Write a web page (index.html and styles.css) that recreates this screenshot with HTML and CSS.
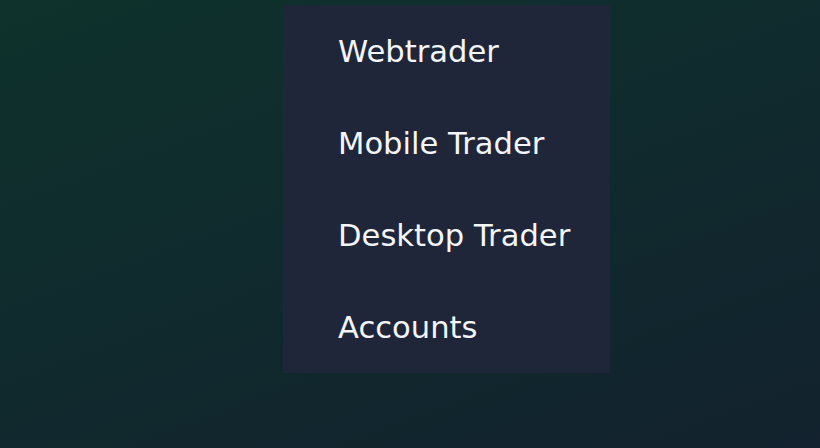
FILE: index.html
```html
<!DOCTYPE html>
<html lang="en">
<head>
<meta charset="utf-8">
<title>Menu</title>
<link rel="stylesheet" href="styles.css">
</head>
<body>
<div class="page">
  <nav class="menu">
    <a class="menu-item" href="#">Webtrader</a>
    <a class="menu-item" href="#">Mobile Trader</a>
    <a class="menu-item" href="#">Desktop Trader</a>
    <a class="menu-item" href="#">Accounts</a>
  </nav>
</div>
</body>
</html>
```
FILE: styles.css
```css
html, body {
  margin: 0;
  padding: 0;
}
body {
  width: 820px;
  height: 448px;
  overflow: hidden;
  background: linear-gradient(160deg, #0e322c 0%, #10292d 55%, #13222e 100%);
  font-family: "DejaVu Sans", "Noto Sans", sans-serif;
}
.page {
  padding: 5px 0 0 283px;
}
.menu {
  width: 327px;
  background: #1f263a;
  display: flex;
  flex-direction: column;
}
.menu-item {
  display: block;
  box-sizing: border-box;
  height: 92px;
  padding: 2px 0 0 55px;
  line-height: 90px;
  font-size: 30.6px;
  color: #f4f5f7;
  text-decoration: none;
}
```
